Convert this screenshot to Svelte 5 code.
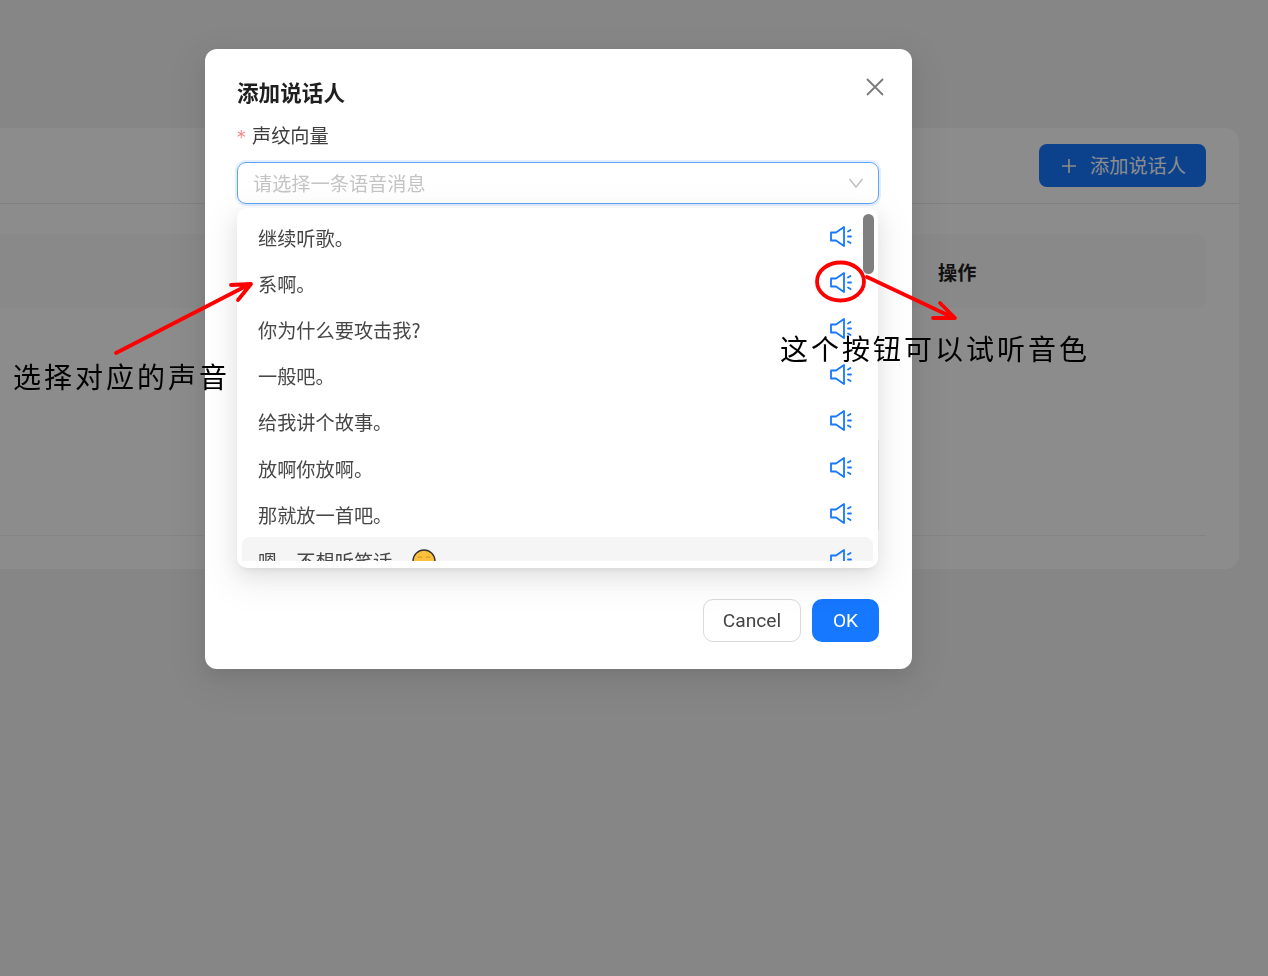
<script>
  const rows = ['继续听歌。', '系啊。', '你为什么要攻击我?', '一般吧。', '给我讲个故事。', '放啊你放啊。', '那就放一首吧。', '嗯，不想听笑话。'];
</script>

<div class="page">
  <section class="card">
    <header class="card-head">
      <button class="add-btn">
        <svg class="plus" width="16" height="16" viewBox="0 0 16 16"><path d="M8 1 V15 M1 8 H15" /></svg>
        添加说话人
      </button>
    </header>
    <div class="table">
      <div class="thead"><span class="th">操作</span></div>
      <div class="tbody"></div>
    </div>
  </section>
</div>

<div class="mask"></div>

<div class="modal">
  <h2 class="title">添加说话人</h2>
  <svg class="close" width="20" height="20" viewBox="0 0 20 20"><path d="M2 2 L18 18 M18 2 L2 18" /></svg>
  <div class="label"><span class="star">*</span>声纹向量</div>
  <div class="field">
    <div class="select">
      <span class="ph">请选择一条语音消息</span>
      <svg class="chev" width="16" height="10" viewBox="0 0 16 10"><path d="M1.5 1 L8 9 L14.5 1" /></svg>
    </div>
    <div class="dropdown">
      <div class="viewport">
        {#each rows as r, i}
          <div class="item" class:active={i === 7}>
            <span class="txt">{r}</span>
            {#if i === 7}
              <svg class="emoji" width="24" height="24" viewBox="0 0 24 24">
                <circle cx="12" cy="12" r="11" fill="#fcc13c" stroke="#333" stroke-width="1.3" />
                <path d="M6 9 Q8 6.5 10 9 M14 9 Q16 6.5 18 9" fill="none" stroke="#d9951f" stroke-width="1.2" />
              </svg>
            {/if}
            <svg class="spk" width="24" height="24" viewBox="0 0 24 24">
              <path class="body" d="M2 7.5 H7 L15 2 V21 L7 15.5 H2 Z" />
              <path class="tick" d="M19 6.5 L21.5 5 M19 11.5 H22 M19 16.5 L21.5 18" />
            </svg>
          </div>
        {/each}
      </div>
      <div class="thumb"></div>
    </div>
  </div>
  <footer class="foot">
    <button class="btn cancel">Cancel</button>
    <button class="btn ok">OK</button>
  </footer>
</div>

<div class="edge-line"></div>

<svg class="ink" width="1268" height="976" viewBox="0 0 1268 976">
  <path d="M116 353 L250 284 M231 285 L251 284 L238 300" />
  <ellipse cx="840.5" cy="281.5" rx="23.5" ry="19" />
  <path d="M867 277 L954 318 M940 303 L955 318 L933 318" />
</svg>
<div class="note left">选择对应的声音</div>
<div class="note right">这个按钮可以试听音色</div>

<style>
  :global(body) {
    margin: 0;
    background: #f5f5f5;
    font-family: "Noto Sans CJK SC", "Noto Sans", sans-serif;
    overflow: hidden;
  }
  .page {
    height: 976px;
    padding: 128px 29px 0 0;
    box-sizing: border-box;
  }
  .card {
    background: #fff;
    height: 441px;
    border-radius: 0 14px 14px 0;
    display: flex;
    flex-direction: column;
  }
  .card-head {
    height: 76px;
    box-sizing: border-box;
    border-bottom: 1px solid #ececec;
    display: flex;
    justify-content: flex-end;
    padding: 16px 33px 0 0;
  }
  .add-btn {
    width: 167px;
    height: 43px;
    border: 0;
    border-radius: 8px;
    background: #1677ff;
    color: #fff;
    font: 400 19.2px/1 "Noto Sans CJK SC", sans-serif;
    display: flex;
    align-items: center;
    justify-content: center;
    gap: 13px;
    padding: 0 0 0 2px;
  }
  .plus { fill: none; stroke: #fff; stroke-width: 1.6; flex: none; }
  .table { padding: 30px 33px 0 0; }
  .thead {
    height: 74px;
    background: #fafafa;
    display: flex;
    align-items: center;
    padding-left: 938px;
    border-radius: 0 10px 10px 0;
  }
  .th { font-size: 19.2px; font-weight: 700; color: #1f1f1f; padding-top: 2px; }
  .tbody { height: 227px; border-bottom: 1px solid #f0f0f0; }
  .mask {
    position: fixed;
    inset: 0;
    background: rgba(0, 0, 0, 0.45);
  }
  .modal {
    position: absolute;
    left: 205px;
    top: 49px;
    width: 707px;
    height: 620px;
    box-sizing: border-box;
    padding: 26px 33px 27px 32px;
    background: #fff;
    border-radius: 12px;
    display: flex;
    flex-direction: column;
    box-shadow: 0 7px 19px rgba(0,0,0,.08), 0 11px 34px 10px rgba(0,0,0,.05);
  }
  .title {
    margin: 0;
    font-size: 21.6px;
    line-height: 34px;
    font-weight: 700;
    color: #1f1f1f;
  }
  .close {
    position: absolute;
    left: 659.5px;
    top: 28px;
    fill: none;
    stroke: #7a7a7a;
    stroke-width: 1.8;
  }
  .label {
    margin-top: 9px;
    height: 34px;
    font-size: 19.2px;
    line-height: 34px;
    color: #3d3d3d;
  }
  .star {
    display: inline-block;
    width: 15px;
    color: #ff7b7b;
    font-family: "DejaVu Sans", sans-serif;
    font-size: 17px;
  }
  .field { position: relative; margin-top: 10px; }
  .select {
    height: 42px;
    box-sizing: border-box;
    border: 1.5px solid #5fa3f5;
    border-radius: 9px;
    box-shadow: 0 0 0 2px rgba(22,119,255,.12);
    padding: 0 14px 0 15px;
    display: flex;
    align-items: center;
    justify-content: space-between;
  }
  .ph { font-size: 19.2px; color: #c4c4c4; }
  .chev { fill: none; stroke: #bfbfbf; stroke-width: 1.5; }
  .dropdown {
    position: absolute;
    left: 0;
    top: 46px;
    width: 641px;
    height: 360px;
    box-sizing: border-box;
    padding: 6px 5px;
    background: #fff;
    border-radius: 10px;
    box-shadow: 0 7px 19px rgba(0,0,0,.08), 0 4px 7px -5px rgba(0,0,0,.12), 0 11px 34px 10px rgba(0,0,0,.05);
  }
  .viewport { height: 347px; overflow: hidden; }
  .item {
    height: 46.2px;
    display: flex;
    align-items: center;
    padding: 1px 20px 0 16px;
    box-sizing: border-box;
    border-radius: 8px;
    font-size: 19.2px;
    color: #474747;
  }
  .item.active { background: #f5f5f5; }
  .emoji { margin-left: 0; flex: none; }
  .spk { margin-left: auto; margin-top: -2px; flex: none; }
  .body { fill: none; stroke: #1677ff; stroke-width: 1.8; stroke-linejoin: round; }
  .tick { fill: none; stroke: #1677ff; stroke-width: 1.8; stroke-linecap: round; }
  .thumb {
    position: absolute;
    left: 626px;
    top: 6px;
    width: 11px;
    height: 60px;
    border-radius: 6px;
    background: #7f7f7f;
  }
  .foot {
    margin-top: auto;
    display: flex;
    justify-content: flex-end;
    gap: 11px;
  }
  .btn {
    height: 43px;
    border-radius: 10px;
    font: 400 19.2px/1 Roboto, sans-serif;
    padding: 0;
  }
  .cancel { width: 98px; background: #fff; border: 1px solid #d9d9d9; color: #444; }
  .ok { width: 67px; background: #1677ff; border: 0; color: #fff; }
  .edge-line {
    position: absolute;
    left: 878px;
    top: 440px;
    width: 1px;
    height: 90px;
    background: #dcdcdc;
  }
  .ink {
    position: absolute;
    left: 0;
    top: 0;
    pointer-events: none;
    fill: none;
    stroke: #f00;
    stroke-width: 3.8;
    stroke-linecap: round;
    stroke-linejoin: round;
  }
  .note {
    position: absolute;
    font-size: 28px;
    line-height: 40px;
    letter-spacing: 3px;
    color: #000;
    white-space: nowrap;
  }
  .note.left { left: 13px; top: 356px; }
  .note.right { left: 780px; top: 328px; }
</style>
